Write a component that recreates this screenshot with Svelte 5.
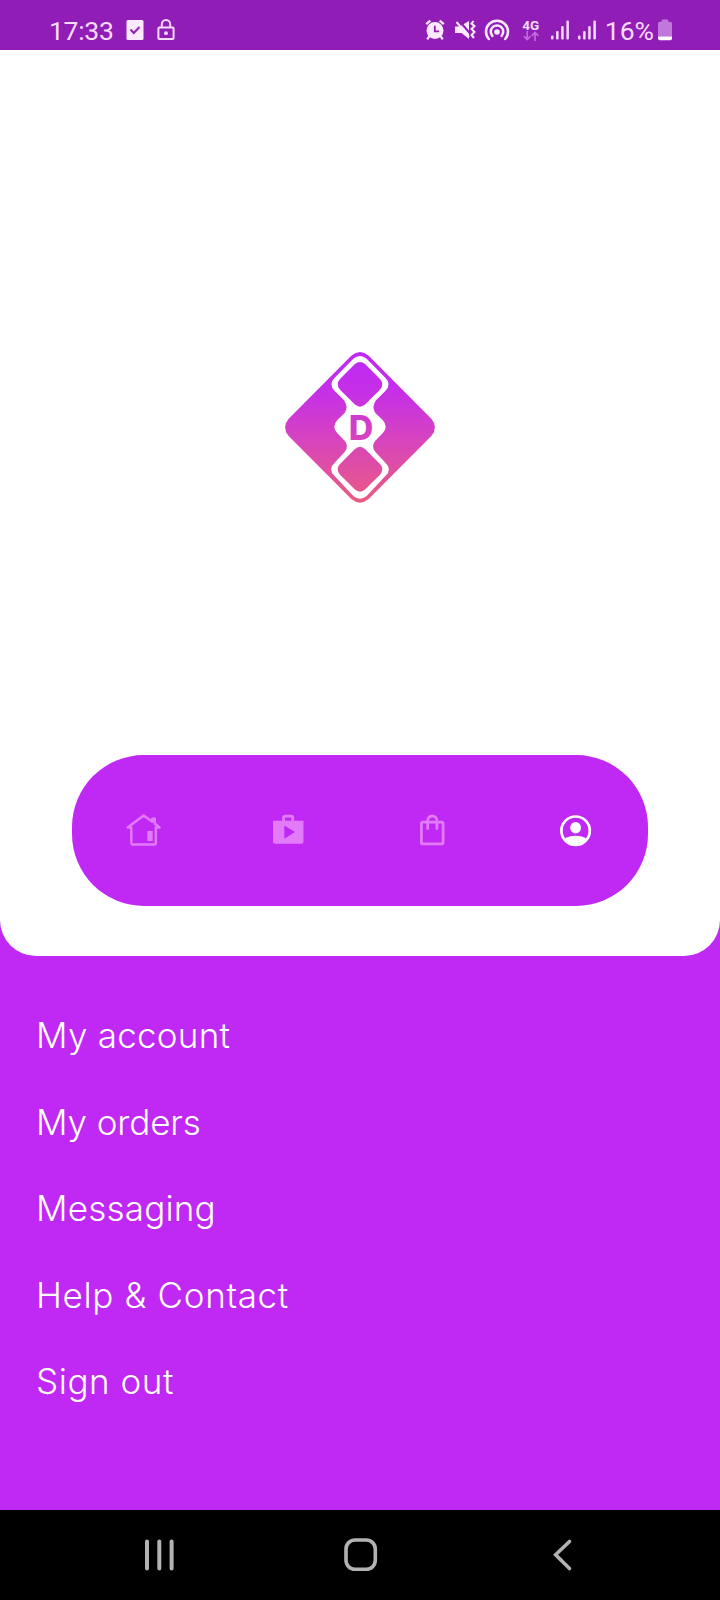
<script>
  const items = [
    { label: 'My account', spacing: 0.25 },
    { label: 'My orders', spacing: -0.1 },
    { label: 'Messaging', spacing: 0.2 },
    { label: 'Help & Contact', spacing: 0.66 },
    { label: 'Sign out', spacing: 0.55 },
  ];
</script>

<div class="screen">
  <header class="status">
    <div class="left">
      <span class="time">17:33</span>
      <svg class="check" width="18" height="22" viewBox="0 0 18 22">
        <rect x="0.5" y="1" width="17" height="20" rx="1.5" fill="#fbeaff" />
        <path d="M4.5 10.5 7.8 14 13.5 8" fill="none" stroke="#901db5" stroke-width="2" />
      </svg>
      <svg class="lock" width="18" height="22" viewBox="0 0 18 22" fill="none" stroke="#f8dcff" stroke-width="2">
        <rect x="1.4" y="8.5" width="15.2" height="11.6" rx="1" />
        <path d="M4.8 8.5V5.3a4.2 4.2 0 0 1 8.4 0v3.2" />
        <circle cx="9" cy="14.2" r="1.9" fill="#f8dcff" stroke="none" />
      </svg>
    </div>
    <div class="right">
      <svg width="20" height="22" viewBox="0 0 20 22">
        <circle cx="10" cy="11.5" r="8.5" fill="#fbeaff" />
        <path d="M1.2 5.2 5.3 1.7M18.8 5.2 14.7 1.7M4.5 17 2.2 20.3M15.5 17l2.3 3.3" stroke="#fbeaff" stroke-width="2.3" />
        <path d="M9.8 6.8v5.5h4.4" fill="none" stroke="#901db5" stroke-width="1.8" />
      </svg>
      <svg class="mute" width="21" height="22" viewBox="0 0 21 22">
        <path d="M0 7.500h4.500L14 2v18l-7.500-6H0z" fill="#fbeaff" />
        <path d="M3.500 1 16 15.500" stroke="#901db5" stroke-width="2" />
        <path d="M1.500 3 14 18" stroke="#fbeaff" stroke-width="2" />
        <path d="M18.500 2l-2 2.500 3 2.500-3 3 3 3-3 3 2.500 3" fill="none" stroke="#fbeaff" stroke-width="2" />
      </svg>
      <svg class="hotspot" width="26" height="22" viewBox="0 0 26 22" fill="none" stroke="#fbeaff" stroke-width="2.500" stroke-linecap="round">
        <path d="M4.800 20A11 11 0 1 1 21.200 20" />
        <path d="M8.400 16.800A6.200 6.200 0 1 1 17.600 16.800" />
        <circle cx="13" cy="13" r="2.800" fill="#fbeaff" stroke="none" />
      </svg>
      <div class="net">
        <span>4G</span>
        <svg width="16" height="10" viewBox="0 0 16 10" fill="none" stroke="#c06bdc" stroke-width="1.7">
          <path d="M4.2 0v8.5M.8 5.2l3.4 3.4 3.4-3.4M12 10V1.5M8.6 4.8 12 1.4l3.4 3.4" />
        </svg>
      </div>
      {#each [0, 1] as n (n)}
        <svg class="signal" width="19" height="22" viewBox="0 0 19 22" fill="#f8dcff">
          <rect x="0" y="16.500" width="2.500" height="4" rx="1" />
          <rect x="5.100" y="12" width="2.500" height="8.500" rx="1" />
          <rect x="10.200" y="7" width="2.500" height="13.500" rx="1" />
          <rect x="15.400" y="1.500" width="2.500" height="19" rx="1" />
        </svg>
      {/each}
      <span class="pct">16%</span>
      <svg class="battery" width="14" height="22" viewBox="0 0 14 22">
        <path d="M3.7 2.8V1.5Q3.7.6 4.6.6h4.8q.9 0 .9.9v1.3h2q1.7 0 1.7 1.7v13.3H0V4.5Q0 2.8 1.7 2.8z" fill="#c078dd" />
        <path d="M0 17.5h14v2q0 1.8-1.8 1.8H1.8Q0 21.300 0 19.500z" fill="#fff" />
      </svg>
    </div>
  </header>

  <main>
    <section class="panel">
      <svg class="logo" width="180" height="180" viewBox="0 0 540 540">
        <defs>
          <linearGradient id="brand" gradientUnits="userSpaceOnUse" x1="0" y1="36" x2="0" y2="488">
            <stop offset="0" stop-color="#bd28f5" />
            <stop offset="0.28" stop-color="#c630e6" />
            <stop offset="0.6" stop-color="#d845bb" />
            <stop offset="1" stop-color="#ea5b82" />
          </linearGradient>
        </defs>
        <path fill="url(#brand)" d="M244 47Q270 25 296 47L484 236Q506 262 484 288L296 477Q270 499 244 477L56 288Q34 262 56 236Z" />
        <path fill="#fff" d="M250 56Q270 40 290 56L346 113Q366 133 346 153L318 181Q304 200 316 219L338 240Q356 260 338 280L316 302Q302 318 316 336L346 368Q368 388 346 408L290 468Q270 484 250 468L194 408Q172 388 194 368L224 336Q238 318 224 302L202 280Q184 260 202 240L224 219Q236 200 222 181L194 153Q174 133 194 113Z" />
        <path fill="url(#brand)" d="M254 73Q270 59 286 73L330 117Q344 133 330 149L286 193Q270 207 254 193L210 149Q196 133 210 117Z" />
        <path fill="url(#brand)" d="M254 328Q270 313 286 328L330 372Q344 388 330 404L286 448Q270 462 254 448L210 404Q196 388 210 372Z" />
        <text x="236" y="300" fill="url(#brand)">D</text>
      </svg>

      <nav class="tabs">
        <span class="tab">
          <svg width="36" height="36" viewBox="0 0 36 36" fill="none" stroke="#e27bfa" stroke-width="2.4" stroke-linejoin="round">
            <path d="M1.600 15.500h3.700V31q0 1.500 1.500 1.500h21.500q1.500 0 1.500-1.500V15.500h3.800L28.800 11.500V6.800h-2.500v3L17.600 3.500z" />
            <rect x="21.300" y="19" width="5.400" height="10" fill="#e27bfa" stroke="none" />
          </svg>
        </span>
        <span class="tab">
          <svg width="36" height="36" viewBox="0 0 36 36" fill="#e27bfa">
            <path fill-rule="evenodd" d="M3 8.800h9.200V5.500q0-2.700 2.700-2.700h6.500q2.700 0 2.700 2.700v3.300H33.500v20.500q0 2.500-2.500 2.500H5.500q-2.500 0-2.500-2.500zM15 8.800h6.300V5.600H15zM14.300 13.500v13.200L25.100 20z" />
          </svg>
        </span>
        <span class="tab">
          <svg width="36" height="36" viewBox="0 0 36 36" fill="none" stroke="#e27bfa" stroke-width="2.800">
            <rect x="7.400" y="10.200" width="21.700" height="21.700" rx="1.500" />
            <path d="M13.700 16.500V8.600a4.600 4.600 0 0 1 9.200 0v7.900" stroke-linecap="round" />
          </svg>
        </span>
        <span class="tab">
          <svg width="36" height="36" viewBox="0 0 36 36">
            <circle cx="17.600" cy="18.700" r="14.200" fill="none" stroke="#fff" stroke-width="2.700" />
            <ellipse cx="17.600" cy="15.700" rx="5.400" ry="5.800" fill="#fff" />
            <path d="M6.300 27Q11 23.800 17.600 23.800T28.900 27Q25 33.200 17.600 33.200T6.300 27z" fill="#fff" />
          </svg>
        </span>
      </nav>
    </section>

    <ul class="menu">
      {#each items as item (item.label)}
        <li><span style="letter-spacing: {item.spacing}px">{item.label}</span></li>
      {/each}
    </ul>
  </main>

  <footer class="system">
    <svg width="32" height="36" viewBox="0 0 32 36" stroke="#b2b2b2" stroke-width="4" stroke-linecap="round">
      <path d="M4 5.500v27M16.300 5.500v27M28.600 5.500v27" />
    </svg>
    <svg width="36" height="36" viewBox="0 0 36 36">
      <rect x="4" y="4" width="29.300" height="29.300" rx="9" fill="none" stroke="#b2b2b2" stroke-width="3.600" />
    </svg>
    <svg width="32" height="36" viewBox="0 0 32 36" fill="none" stroke="#b2b2b2" stroke-width="3.600" stroke-linecap="round">
      <path d="M24.500 5.500 10.600 18.700 24.500 32.500" />
    </svg>
  </footer>
</div>

<style>
  :global(body) {
    margin: 0;
  }
  .screen {
    width: 720px;
    height: 1600px;
    display: flex;
    flex-direction: column;
    background: #c028f3;
    overflow: hidden;
    font-family: Roboto, sans-serif;
  }
  .status {
    box-sizing: border-box;
    height: 50px;
    padding: 10px 48px 0 49px;
    display: flex;
    justify-content: space-between;
    background: #901db5;
    color: #f8dcff;
  }
  .left,
  .right {
    display: flex;
    align-items: center;
    height: 40px;
  }
  .time,
  .pct {
    font-size: 26.500px;
    line-height: 40px;
    padding-top: 1px;
  }
  .time {
    letter-spacing: -0.300px;
  }
  .check {
    margin-left: 12px;
  }
  .lock {
    margin-left: 13px;
  }
  .mute {
    margin-left: 10px;
  }
  .hotspot {
    margin-left: 8px;
  }
  .net {
    display: flex;
    flex-direction: column;
    align-items: center;
    width: 18px;
    margin: 0 9px 0 12px;
    font-size: 13.500px;
    font-weight: 700;
    line-height: 12px;
  }
  .signal {
    margin-left: 2px;
    margin-right: 6px;
  }
  .pct {
    margin-left: 2px;
  }
  .battery {
    margin-left: 4px;
  }
  main {
    height: 1460px;
    display: flex;
    flex-direction: column;
  }
  .panel {
    box-sizing: border-box;
    height: 906px;
    padding: 290px 72px 50px;
    display: flex;
    flex-direction: column;
    align-items: center;
    justify-content: space-between;
    background: #fff;
    border-radius: 0 0 36px 36px;
  }
  .logo text {
    font: 800 102px Inter, sans-serif;
  }
  .tabs {
    box-sizing: border-box;
    width: 576px;
    height: 151px;
    padding-bottom: 2px;
    display: grid;
    grid-template-columns: repeat(4, 1fr);
    align-items: center;
    justify-items: center;
    border-radius: 72px;
    background: #c028f3;
  }
  .tab {
    display: flex;
  }
  .menu {
    list-style: none;
    margin: 0;
    padding: 36px 36px 0;
    color: #fff;
    font: 300 35px Inter, sans-serif;
  }
  .menu li {
    height: 86.500px;
    line-height: 86.500px;
    white-space: nowrap;
  }
  .system {
    flex: 1;
    display: flex;
    align-items: center;
    justify-content: space-between;
    padding: 0 143px 2px;
    background: #000;
  }
</style>
